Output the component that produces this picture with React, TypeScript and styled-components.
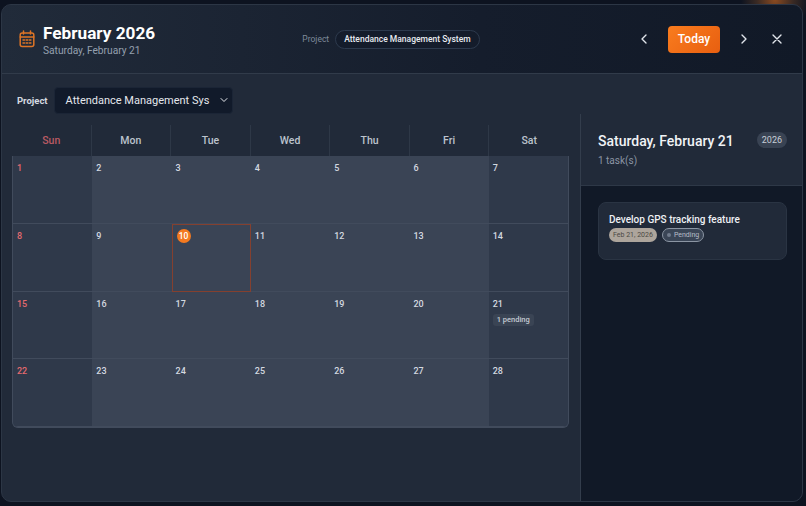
import styled, { createGlobalStyle } from 'styled-components';

const GlobalStyle = createGlobalStyle`
  html, body {
    margin: 0;
    width: 806px;
    height: 506px;
    overflow: hidden;
    background:
      radial-gradient(circle at 775px 0, #8a4a20 0, #3a2a24 18px, transparent 34px),
      #0d1320;
    font-family: Roboto, "Noto Sans", sans-serif;
  }
`;

const Page = styled.div`
  width: 806px;
  height: 506px;
  padding: 4px 3px 4px 1px;
  box-sizing: border-box;
`;

const Modal = styled.div`
  height: 100%;
  display: flex;
  flex-direction: column;
  background: #212a39;
  border: 1px solid #2c3645;
  border-radius: 10px;
  overflow: hidden;
  box-sizing: border-box;
`;

const Header = styled.header`
  height: 69px;
  flex: none;
  display: grid;
  grid-template-columns: 1fr auto 1fr;
  align-items: center;
  padding: 0 15px 0 17px;
  background: linear-gradient(90deg, #212b3a 0%, #151d2c 60%, #111927 100%);
  border-bottom: 1px solid #313b4a;
  box-sizing: border-box;
`;

const TitleBlock = styled.div`
  display: flex;
  align-items: center;
  gap: 8px;
`;

const TitleText = styled.div`
  display: flex;
  flex-direction: column;
  padding-top: 2px;
`;

const Title = styled.h1`
  margin: 0;
  color: #fff;
  font-size: 17.2px;
  font-weight: 700;
  line-height: 22px;
`;

const Subtitle = styled.div`
  color: #95a0af;
  font-size: 10.2px;
  line-height: 14px;
`;

const ProjectInfo = styled.div`
  display: flex;
  align-items: center;
  gap: 6px;
  margin-right: 24px;
`;

const ProjectLabel = styled.span`
  color: #7f8a9a;
  font-size: 8.5px;
`;

const ProjectPill = styled.span`
  padding: 2px 8px;
  border: 1px solid #2d3a4d;
  border-radius: 10px;
  background: #141c2b;
  color: #e8ebf0;
  font-size: 8.5px;
  font-weight: 500;
  line-height: 13px;
`;

const Controls = styled.div`
  display: flex;
  align-items: center;
  justify-content: flex-end;
`;

const IconButton = styled.button`
  width: 20px;
  height: 20px;
  padding: 0;
  display: flex;
  align-items: center;
  justify-content: center;
  border: 0;
  background: transparent;
  color: #e2e6ec;
`;

const TodayButton = styled.button`
  width: 52px;
  height: 27px;
  margin: 0 14px;
  border: 0;
  border-radius: 4px;
  background: linear-gradient(135deg, #f97c1e, #e85f10);
  color: #fff;
  font-family: inherit;
  font-size: 12px;
  font-weight: 500;
`;

const CloseButton = styled(IconButton)`
  margin-left: 13px;
`;

const Toolbar = styled.div`
  height: 40px;
  flex: none;
  display: flex;
  align-items: center;
  gap: 6px;
  padding: 12px 0 0 15px;
  box-sizing: border-box;
`;

const ToolbarLabel = styled.label`
  color: #d5dae1;
  font-size: 9.5px;
  font-weight: 700;
`;

const FakeSelect = styled.div`
  width: 179px;
  height: 27px;
  display: flex;
  align-items: center;
  justify-content: space-between;
  padding: 0 2px 0 11px;
  background: #111a2a;
  border: 1px solid #1b2536;
  border-radius: 4px;
  color: #e4e7ec;
  font-size: 11px;
  box-sizing: border-box;
  white-space: nowrap;
`;

const Body = styled.div`
  flex: 1;
  min-height: 0;
  display: flex;
`;

const CalendarPane = styled.main`
  flex: 1;
  padding: 11px 11px 0 10px;
  box-sizing: border-box;
`;

const WeekHeader = styled.div`
  display: grid;
  grid-template-columns: repeat(7, 1fr);
  height: 31px;
`;

const WeekDay = styled.div<{ $sunday?: boolean }>`
  display: flex;
  align-items: center;
  justify-content: center;
  color: ${(p) => (p.$sunday ? '#b95a63' : '#bcc3cd')};
  font-size: 10.5px;
  font-weight: 500;
  border-right: 1px solid #2e3847;

  &:last-child {
    border-right: 0;
  }
`;

const MonthGrid = styled.div`
  display: grid;
  grid-template-columns: repeat(7, 1fr);
  grid-auto-rows: 67.75px;
  background: #3a4456;
  border: 1px solid #414b5c;
  border-top: 0;
  border-radius: 0 0 6px 6px;
  overflow: hidden;
`;

const DayCell = styled.div<{ $weekend?: boolean; $today?: boolean }>`
  padding: 6px 4px;
  box-sizing: border-box;
  background: ${(p) => (p.$weekend ? '#2f394a' : '#3a4455')};
  border-bottom: 1px solid #414b5c;
  outline: ${(p) => (p.$today ? '1.5px solid #84402f' : 'none')};
  outline-offset: -1.5px;
`;

const DayNumber = styled.div<{ $sunday?: boolean }>`
  color: ${(p) => (p.$sunday ? '#e46a6f' : '#d4d9e0')};
  font-size: 9px;
  font-weight: 500;
  line-height: 12px;
`;

const TodayBadge = styled.div`
  width: 14px;
  height: 14px;
  margin: -1px 0 0 1px;
  display: flex;
  align-items: center;
  justify-content: center;
  border-radius: 50%;
  background: #f47a20;
  color: #fff;
  font-size: 8.5px;
  font-weight: 500;
`;

const PendingTag = styled.div`
  width: fit-content;
  margin-top: 4px;
  padding: 1px 4px;
  border-radius: 3px;
  background: #3a4454;
  color: #c4cad3;
  font-size: 7.5px;
  font-weight: 500;
  line-height: 10px;
`;

const SidePanel = styled.aside`
  width: 222px;
  flex: none;
  display: flex;
  flex-direction: column;
  border-left: 1px solid #333d4c;
  box-sizing: border-box;
`;

const SideHeader = styled.div`
  height: 72px;
  flex: none;
  padding: 17px 15px 0 17px;
  border-bottom: 1px solid #2e3847;
  box-sizing: border-box;
`;

const SideTitleRow = styled.div`
  display: flex;
  align-items: center;
  justify-content: space-between;
`;

const SideTitle = styled.h2`
  margin: 0;
  color: #f1f3f6;
  font-size: 14px;
  font-weight: 500;
  line-height: 20px;
`;

const YearBadge = styled.span`
  margin-top: -2px;
  padding: 1px 5px;
  border-radius: 9px;
  background: #394353;
  color: #c8ced7;
  font-size: 9px;
  line-height: 14px;
`;

const TaskCount = styled.div`
  margin-top: 4px;
  color: #8b95a4;
  font-size: 10px;
`;

const TaskList = styled.div`
  flex: 1;
  padding: 16px 15px 0 17px;
  background: #111927;
`;

const TaskCard = styled.div`
  height: 58px;
  padding: 10px 10px 0;
  border: 1px solid #2a3443;
  border-radius: 8px;
  background: #212a39;
  box-sizing: border-box;
`;

const TaskTitle = styled.div`
  color: #eef0f4;
  font-size: 10px;
  font-weight: 500;
  line-height: 14px;
`;

const TaskMeta = styled.div`
  display: flex;
  align-items: center;
  gap: 5px;
  margin-top: 1px;
`;

const DateChip = styled.span`
  padding: 0 4px;
  border-radius: 7px;
  background: #ada59c;
  color: #4a4843;
  font-size: 7px;
  line-height: 14px;
`;

const StatusChip = styled.span`
  display: flex;
  align-items: center;
  gap: 3px;
  padding: 0 4px;
  border: 1px solid #8b95a3;
  border-radius: 7px;
  background: #3a4556;
  color: #b6bdc8;
  font-size: 7px;
  line-height: 12px;
`;

const StatusDot = styled.i`
  width: 4px;
  height: 4px;
  border-radius: 50%;
  background: #6f7a8b;
`;

const Chevron = ({ d, size = 16 }: { d: string; size?: number }) => (
  <svg width={size} height={size} viewBox="0 0 24 24" fill="none" stroke="currentColor" strokeWidth="2" strokeLinecap="round" strokeLinejoin="round" style={{ flex: 'none' }}>
    <path d={d} />
  </svg>
);

const CalendarIcon = () => (
  <svg width="16" height="18" viewBox="0 0 16 18" fill="none" stroke="#dd7426" strokeWidth="1.5" strokeLinecap="round">
    <rect x="1.2" y="3" width="13.6" height="13.6" rx="2" />
    <path d="M1.2 7h13.6M4.5 1v3M11.5 1v3" />
    <path d="M4 10h1.5M7.2 10h1.5M10.4 10h1.5M4 13h1.5M7.2 13h1.5M10.4 13h1.5" />
  </svg>
);

const weekDays = ['Sun', 'Mon', 'Tue', 'Wed', 'Thu', 'Fri', 'Sat'];
const days = Array.from({ length: 28 }, (_, i) => i + 1);

export default function App() {
  return (
    <Page>
      <GlobalStyle />
      <Modal>
        <Header>
          <TitleBlock>
            <CalendarIcon />
            <TitleText>
              <Title>February 2026</Title>
              <Subtitle>Saturday, February 21</Subtitle>
            </TitleText>
          </TitleBlock>
          <ProjectInfo>
            <ProjectLabel>Project</ProjectLabel>
            <ProjectPill>Attendance Management System</ProjectPill>
          </ProjectInfo>
          <Controls>
            <IconButton><Chevron d="m15 18-6-6 6-6" /></IconButton>
            <TodayButton>Today</TodayButton>
            <IconButton><Chevron d="m9 18 6-6-6-6" /></IconButton>
            <CloseButton><Chevron d="M18 6 6 18M6 6l12 12" /></CloseButton>
          </Controls>
        </Header>
        <Toolbar>
          <ToolbarLabel>Project</ToolbarLabel>
          <FakeSelect>
            Attendance Management Sys
            <Chevron d="m6 9 6 6 6-6" size={12} />
          </FakeSelect>
        </Toolbar>
        <Body>
          <CalendarPane>
            <WeekHeader>
              {weekDays.map((d) => (
                <WeekDay key={d} $sunday={d === 'Sun'}>{d}</WeekDay>
              ))}
            </WeekHeader>
            <MonthGrid>
              {days.map((n) => {
                const col = (n - 1) % 7;
                return (
                  <DayCell key={n} $weekend={col === 0 || col === 6} $today={n === 10}>
                    {n === 10 ? (
                      <TodayBadge>10</TodayBadge>
                    ) : (
                      <DayNumber $sunday={col === 0}>{n}</DayNumber>
                    )}
                    {n === 21 && <PendingTag>1 pending</PendingTag>}
                  </DayCell>
                );
              })}
            </MonthGrid>
          </CalendarPane>
          <SidePanel>
            <SideHeader>
              <SideTitleRow>
                <SideTitle>Saturday, February 21</SideTitle>
                <YearBadge>2026</YearBadge>
              </SideTitleRow>
              <TaskCount>1 task(s)</TaskCount>
            </SideHeader>
            <TaskList>
              <TaskCard>
                <TaskTitle>Develop GPS tracking feature</TaskTitle>
                <TaskMeta>
                  <DateChip>Feb 21, 2026</DateChip>
                  <StatusChip><StatusDot />Pending</StatusChip>
                </TaskMeta>
              </TaskCard>
            </TaskList>
          </SidePanel>
        </Body>
      </Modal>
    </Page>
  );
}
